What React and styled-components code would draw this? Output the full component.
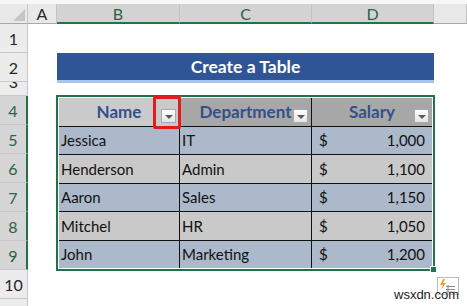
import React from 'react';
import styled, { createGlobalStyle } from 'styled-components';

const GlobalStyle = createGlobalStyle`
  body {
    margin: 0;
    background: #ffffff;
    font-family: Lato, "Open Sans", sans-serif;
  }
`;

const Sheet = styled.div`
  position: relative;
  width: 467px;
  height: 306px;
  overflow: hidden;
  display: flex;
  flex-direction: column;
  background: #ffffff;
`;

const ColumnBar = styled.div`
  display: flex;
  height: 24px;
  border-top: 4px solid #f7f7f7;
  box-sizing: border-box;
  flex-shrink: 0;
`;

const Corner = styled.div`
  position: relative;
  width: 28px;
  flex-shrink: 0;
  background: #e9e9e9;
  border-right: 1px solid #c8c8c8;
  border-bottom: 1px solid #a8a8a8;
  box-sizing: border-box;

  &::after {
    content: '';
    position: absolute;
    right: 2px;
    bottom: 2px;
    border-style: solid;
    border-width: 0 0 12px 12px;
    border-color: transparent transparent #c6c6c6 transparent;
  }
`;

const ColHead = styled.div`
  width: ${({ $w }) => ($w ? `${$w}px` : 'auto')};
  flex: ${({ $w }) => ($w ? '0 0 auto' : '1')};
  display: flex;
  align-items: center;
  justify-content: center;
  box-sizing: border-box;
  font-size: 16px;
  color: ${({ $sel }) => ($sel ? '#2b6243' : '#262626')};
  background: ${({ $sel }) => ($sel ? '#d3d3d3' : '#e8e8e8')};
  border-right: 1px solid #c2c2c2;
  border-bottom: ${({ $sel }) => ($sel ? '2px solid #217346' : '1px solid #a8a8a8')};
`;

const Body = styled.div`
  display: flex;
  flex: 1;
`;

const RowHeads = styled.div`
  width: 28px;
  flex-shrink: 0;
  display: flex;
  flex-direction: column;
`;

const RowHead = styled.div`
  height: ${({ $h }) => $h}px;
  flex-shrink: 0;
  display: flex;
  align-items: flex-end;
  justify-content: center;
  overflow: hidden;
  box-sizing: border-box;
  padding-bottom: 5px;
  font-size: 16px;
  line-height: 16px;
  color: ${({ $sel }) => ($sel ? '#2b6243' : '#262626')};
  background: ${({ $sel }) => ($sel ? '#d6d6d6' : '#ececec')};
  border-bottom: 1px solid #c8c8c8;
  border-right: ${({ $sel }) => ($sel ? '2px solid #217346' : '1px solid #c8c8c8')};
`;

const Cells = styled.div`
  display: grid;
  grid-template-columns: 29px 377px;
  grid-template-rows: 29px 29px 14px 174px;
`;

const Title = styled.div`
  grid-column: 2;
  grid-row: 2;
  height: 27px;
  display: flex;
  align-items: center;
  justify-content: center;
  background: #2f5597;
  border-bottom: 3px solid #a8c5ea;
  color: #ffffff;
  font-weight: 700;
  font-size: 17.5px;
`;

const TableWrap = styled.div`
  grid-column: 2;
  grid-row: 4;
  position: relative;
  margin: -1px 0 0 -1px;
  width: 379px;
  height: 176px;
  box-sizing: border-box;
  border: 2px solid #217346;
  padding: 1px;
  background: #ffffff;
`;

const Table = styled.div`
  display: grid;
  height: 100%;
  grid-template-columns: 120px 131px 1fr;
  grid-template-rows: repeat(6, 1fr);
  gap: 1px;
  background: #111111;
`;

const HeadCell = styled.div`
  display: grid;
  grid-template-columns: 18px 1fr 18px;
  background: ${({ $light }) => ($light ? '#cacaca' : '#a7a7a7')};
  color: #33508c;
  font-weight: 700;
  font-size: 17px;
`;

const HeadText = styled.span`
  grid-column: 2;
  align-self: center;
  text-align: center;
`;

const FilterSlot = styled.span`
  position: relative;
  align-self: end;
  margin-bottom: 3px;
  width: 15px;
  height: 14px;
`;

const FilterButton = styled.span`
  display: flex;
  align-items: center;
  justify-content: center;
  width: 15px;
  height: 14px;
  box-sizing: border-box;
  border: 1px solid #a9a9a9;
  background: linear-gradient(#ffffff, #e4e4e4);

  &::after {
    content: '';
    margin-top: 2px;
    border-style: solid;
    border-width: 4px 4px 0 4px;
    border-color: #5a5a5a transparent transparent transparent;
  }
`;

const RedMark = styled.span`
  position: absolute;
  top: -13px;
  bottom: -6px;
  left: -8px;
  right: -5px;
  border: 3px solid #e41b1b;
  border-radius: 2px;
`;

const Cell = styled.div`
  display: flex;
  align-items: center;
  justify-content: ${({ $money }) => ($money ? 'space-between' : 'flex-start')};
  padding: ${({ $money }) => ($money ? '0 7px 0 7px' : '0 2px')};
  background: ${({ $alt }) => ($alt ? '#c9c9c9' : '#acb9ca')};
  color: #111111;
  font-size: 15px;
`;

const Handle = styled.span`
  position: absolute;
  right: -4px;
  bottom: -4px;
  width: 5px;
  height: 5px;
  background: #217346;
  border: 1px solid #ffffff;
`;

const QuickAnalysis = styled.div`
  position: absolute;
  left: 437px;
  top: 277px;
  width: 22px;
  height: 18px;
`;

const Watermark = styled.div`
  position: absolute;
  left: 394px;
  top: 287px;
  font-family: "Liberation Sans", Arial, sans-serif;
  font-size: 13px;
  color: #1c1c1c;
  text-shadow: 0 0 2px #ffffff;
`;

const rows = [
  { name: 'Jessica', dept: 'IT', salary: '1,000' },
  { name: 'Henderson', dept: 'Admin', salary: '1,100' },
  { name: 'Aaron', dept: 'Sales', salary: '1,150' },
  { name: 'Mitchel', dept: 'HR', salary: '1,050' },
  { name: 'John', dept: 'Marketing', salary: '1,200' },
];

const rowHeads = [
  { n: 1, h: 29 },
  { n: 2, h: 29 },
  { n: 3, h: 14 },
  { n: 4, h: 29, sel: true },
  { n: 5, h: 29, sel: true },
  { n: 6, h: 29, sel: true },
  { n: 7, h: 29, sel: true },
  { n: 8, h: 29, sel: true },
  { n: 9, h: 29, sel: true },
  { n: 10, h: 29 },
  { n: '', h: 29 },
];

const Filter = ({ marked }) => (
  <FilterSlot>
    <FilterButton />
    {marked && <RedMark />}
  </FilterSlot>
);

const App = () => (
  <Sheet>
    <GlobalStyle />
    <ColumnBar>
      <Corner />
      <ColHead $w={29}>A</ColHead>
      <ColHead $w={123} $sel>B</ColHead>
      <ColHead $w={132} $sel>C</ColHead>
      <ColHead $w={122} $sel>D</ColHead>
      <ColHead />
    </ColumnBar>
    <Body>
      <RowHeads>
        {rowHeads.map((r, i) => (
          <RowHead key={i} $h={r.h} $sel={r.sel}>
            {r.n}
          </RowHead>
        ))}
      </RowHeads>
      <Cells>
        <Title>Create a Table</Title>
        <TableWrap>
          <Table>
            <HeadCell $light>
              <HeadText>Name</HeadText>
              <Filter marked />
            </HeadCell>
            <HeadCell>
              <HeadText>Department</HeadText>
              <Filter />
            </HeadCell>
            <HeadCell>
              <HeadText>Salary</HeadText>
              <Filter />
            </HeadCell>
            {rows.map((r, i) => (
              <React.Fragment key={r.name}>
                <Cell $alt={i % 2 === 1}>{r.name}</Cell>
                <Cell $alt={i % 2 === 1}>{r.dept}</Cell>
                <Cell $alt={i % 2 === 1} $money>
                  <span>$</span>
                  <span>{r.salary}</span>
                </Cell>
              </React.Fragment>
            ))}
          </Table>
          <Handle />
        </TableWrap>
      </Cells>
    </Body>
    <QuickAnalysis>
      <svg width="22" height="18" viewBox="0 0 22 18">
        <rect x="0.5" y="0.5" width="21" height="17" fill="#ffffff" stroke="#bdbdbd" />
        <path d="M6 2 L3 8 L6 8 L4 13 L9 6 L6 6 L8 2 Z" fill="#f0a030" />
        <path d="M9 9.5 H18 M9 12.5 H18 M9 15 H18 M11 8 V16" stroke="#8a8a8a" strokeWidth="1" fill="none" />
      </svg>
    </QuickAnalysis>
    <Watermark>wsxdn.com</Watermark>
  </Sheet>
);

export default App;
